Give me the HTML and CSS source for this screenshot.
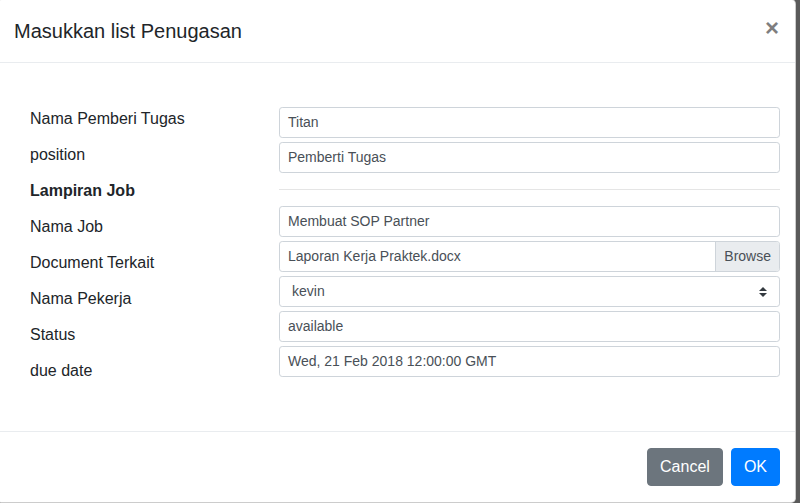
FILE: index.html
```html
<!DOCTYPE html>
<html lang="id">
<head>
<meta charset="utf-8">
<title>Masukkan list Penugasan</title>
<link rel="stylesheet" href="styles.css">
</head>
<body>
<div class="modal">
  <div class="modal-header">
    <h5 class="modal-title">Masukkan list Penugasan</h5>
    <button class="close" type="button">&times;</button>
  </div>
  <div class="modal-body">
    <div class="labels">
      <div class="label">Nama Pemberi Tugas</div>
      <div class="label">position</div>
      <div class="label label-bold">Lampiran Job</div>
      <div class="label">Nama Job</div>
      <div class="label">Document Terkait</div>
      <div class="label">Nama Pekerja</div>
      <div class="label">Status</div>
      <div class="label">due date</div>
    </div>
    <div class="fields">
      <div class="form-control">Titan</div>
      <div class="form-control">Pemberti Tugas</div>
      <div class="divider"></div>
      <div class="form-control">Membuat SOP Partner</div>
      <div class="form-control file">
        <span class="file-name">Laporan Kerja Praktek.docx</span>
        <span class="file-browse">Browse</span>
      </div>
      <div class="form-control select">
        <span>kevin</span>
        <svg class="select-arrows" width="8" height="10" viewBox="0 0 4 5"><path d="M2 0L0 2h4zm0 5L0 3h4z" fill="#343a40"/></svg>
      </div>
      <div class="form-control">available</div>
      <div class="form-control">Wed, 21 Feb 2018 12:00:00 GMT</div>
    </div>
  </div>
  <div class="modal-footer">
    <button class="btn btn-secondary" type="button">Cancel</button>
    <button class="btn btn-primary" type="button">OK</button>
  </div>
</div>
</body>
</html>
```
FILE: styles.css
```css
* {
  box-sizing: border-box;
}

html, body {
  margin: 0;
  padding: 0;
  height: 100%;
}

body {
  background: #5a5a5a;
  font-family: "Liberation Sans", Arial, sans-serif;
  color: #212529;
  overflow: hidden;
  position: relative;
}

.modal {
  position: absolute;
  left: -3px;
  top: -1px;
  width: 799px;
  background: #fff;
  border: 1px solid rgba(0, 0, 0, 0.2);
  border-radius: 4.8px;
  display: flex;
  flex-direction: column;
}

.modal-header {
  display: flex;
  align-items: flex-start;
  padding: 16px;
  border-bottom: 1px solid #e9ecef;
}

.modal-title {
  margin: 0;
  font-size: 20px;
  font-weight: 400;
  line-height: 30px;
  color: #212529;
}

.close {
  margin: -16px -16px -16px auto;
  padding: 16px;
  background: transparent;
  border: 0;
  font-family: "Liberation Sans", Arial, sans-serif;
  font-size: 24px;
  font-weight: 700;
  line-height: 1;
  color: #000;
  opacity: 0.5;
  cursor: pointer;
}

.modal-body {
  display: grid;
  grid-template-columns: 265px 1fr;
  padding: 43px 15px 37px 16px;
}

.labels {
  display: flex;
  flex-direction: column;
  padding-left: 16px;
}

.label {
  height: 36px;
  font-size: 16px;
  line-height: 24px;
  padding-top: 1px;
  color: #212529;
}

.label-bold {
  font-weight: 700;
}

.fields {
  margin-top: 1px;
  display: flex;
  flex-direction: column;
}

.form-control {
  height: 31px;
  margin-bottom: 4px;
  padding: 4px 8px;
  border: 1px solid #ced4da;
  border-radius: 3.2px;
  background: #fff;
  font-size: 14px;
  line-height: 21px;
  color: #495057;
  white-space: nowrap;
}

.divider {
  height: 1px;
  margin: 12px 0 16px 0;
  background: rgba(0, 0, 0, 0.1);
}

.file {
  display: flex;
  padding: 0;
  overflow: hidden;
}

.file-name {
  flex: 1;
  padding: 4px 8px;
}

.file-browse {
  padding: 4px 8px;
  background: #e9ecef;
  border-left: 1px solid #ced4da;
  color: #495057;
}

.select {
  display: flex;
  align-items: center;
  justify-content: space-between;
  padding: 4px 12px;
}

.select-arrows {
  display: block;
}

.modal-footer {
  display: flex;
  justify-content: flex-end;
  align-items: center;
  gap: 8px;
  padding: 16px 15px 16px 16px;
  border-top: 1px solid #e9ecef;
}

.btn {
  height: 38px;
  padding: 6px 12px;
  border: 1px solid transparent;
  border-radius: 4px;
  font-family: "Liberation Sans", Arial, sans-serif;
  font-size: 16px;
  line-height: 24px;
  color: #fff;
  cursor: pointer;
}

.btn-secondary {
  background: #6c757d;
  border-color: #6c757d;
}

.btn-primary {
  background: #007bff;
  border-color: #007bff;
}
```
